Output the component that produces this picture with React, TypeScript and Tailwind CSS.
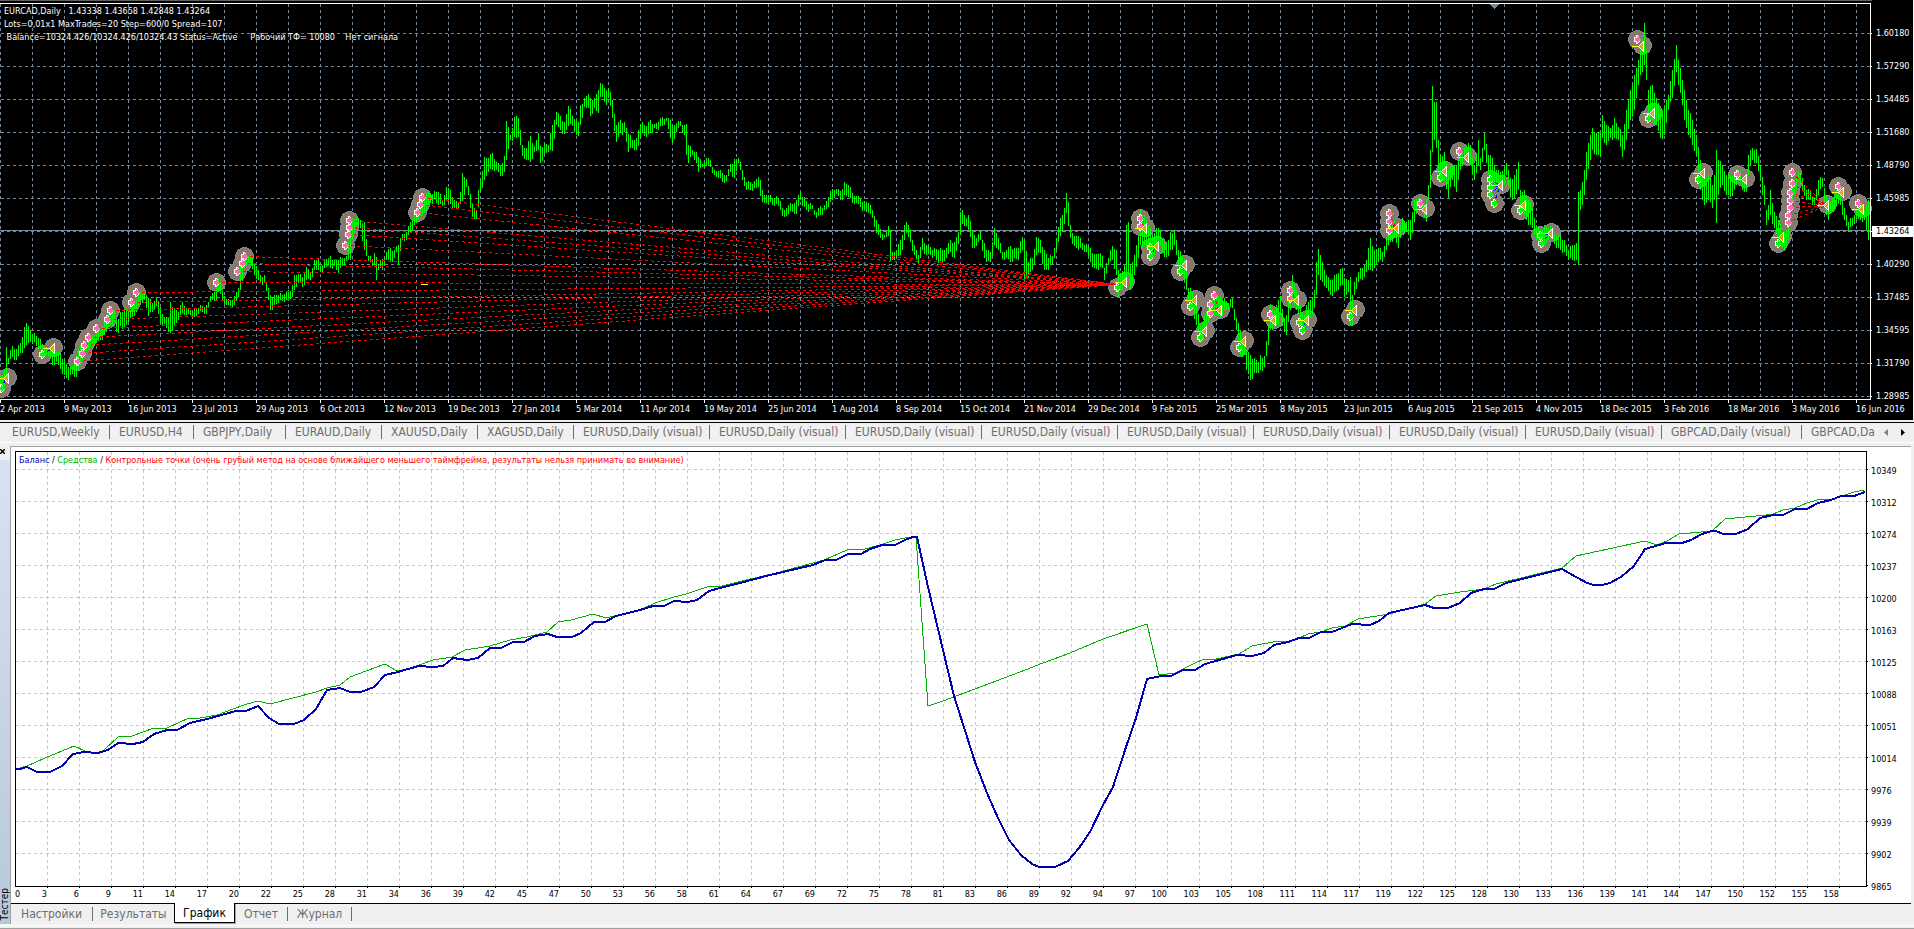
import React, { useState } from "react";
import clsx from "clsx";

type Point = [number, number];

interface Trade {
  exit: Point;
  buys?: Point[];
  sells?: Point[];
}

// [x, high, low] anchors of the daily bars, interpolated every 2px
const ANCHORS: [number, number, number][] = [
  [0, 375, 392], [4, 370, 385], [6, 347, 375], [8, 358, 364], [12, 346, 357], [16, 349, 360], [20, 343, 353], [24, 327, 348],
  [26, 323, 345], [30, 330, 342], [34, 333, 342], [38, 338, 350], [42, 344, 352], [48, 349, 356], [52, 352, 365], [56, 352, 362],
  [60, 354, 369], [64, 360, 375], [68, 367, 380], [72, 366, 374], [76, 355, 377], [80, 345, 365], [84, 345, 352], [88, 340, 350],
  [92, 335, 347], [96, 333, 343], [100, 330, 340], [104, 320, 335], [110, 312, 325], [114, 310, 322], [116, 320, 332], [118, 319, 333],
  [120, 312, 326], [124, 308, 327], [128, 312, 322], [132, 305, 317], [136, 300, 312], [140, 292, 302], [144, 292, 300], [148, 298, 316],
  [152, 303, 312], [156, 297, 306], [160, 307, 324], [164, 317, 324], [168, 317, 332], [170, 302, 333], [174, 308, 325], [178, 312, 320],
  [182, 302, 313], [186, 308, 315], [190, 310, 315], [194, 308, 317], [198, 308, 314], [202, 306, 312], [206, 305, 314], [208, 302, 308],
  [212, 293, 300], [216, 288, 300], [218, 278, 292], [222, 290, 300], [226, 299, 305], [230, 300, 306], [234, 296, 305], [238, 288, 297],
  [240, 265, 290], [244, 255, 268], [248, 256, 264], [252, 258, 269], [256, 266, 279], [260, 275, 283], [264, 275, 282], [266, 283, 291],
  [270, 295, 310], [274, 295, 305], [278, 295, 303], [282, 295, 301], [286, 291, 300], [290, 291, 299], [294, 275, 290], [298, 274, 283],
  [302, 277, 287], [306, 267, 280], [310, 272, 280], [314, 260, 270], [318, 259, 270], [320, 265, 272], [324, 260, 268], [328, 258, 265],
  [330, 256, 268], [334, 260, 266], [338, 260, 273], [342, 258, 266], [346, 256, 261], [350, 230, 260], [352, 218, 240], [356, 217, 225],
  [360, 220, 228], [364, 222, 250], [368, 256, 261], [372, 259, 266], [374, 253, 265], [376, 257, 280], [378, 264, 270], [382, 259, 270],
  [386, 252, 260], [390, 248, 262], [394, 250, 258], [396, 246, 252], [398, 245, 265], [402, 234, 240], [406, 232, 240], [410, 222, 232],
  [414, 212, 225], [418, 210, 220], [422, 198, 215], [426, 193, 210], [430, 193, 203], [434, 191, 200], [438, 192, 205], [442, 200, 206],
  [446, 187, 201], [450, 190, 204], [454, 200, 208], [458, 202, 208], [460, 192, 204], [462, 173, 201], [466, 179, 187], [468, 186, 195],
  [470, 194, 208], [472, 204, 217], [476, 210, 219], [478, 190, 207], [480, 180, 192], [484, 157, 180], [488, 158, 172], [492, 153, 170],
  [496, 162, 170], [500, 165, 176], [504, 156, 172], [506, 121, 160], [510, 135, 140], [514, 117, 137], [516, 116, 138], [518, 118, 137],
  [522, 145, 156], [526, 148, 160], [530, 136, 162], [534, 146, 152], [538, 133, 150], [540, 146, 163], [544, 143, 154], [548, 145, 152],
  [552, 125, 151], [556, 112, 125], [560, 116, 130], [564, 122, 134], [568, 106, 126], [572, 116, 126], [576, 120, 135], [578, 122, 136],
  [580, 105, 125], [584, 98, 107], [588, 94, 108], [590, 98, 116], [594, 98, 108], [598, 90, 113], [600, 83, 97], [602, 84, 97],
  [606, 90, 105], [608, 88, 98], [612, 100, 118], [616, 125, 142], [620, 120, 133], [624, 122, 132], [628, 134, 152], [632, 140, 148],
  [636, 138, 150], [638, 130, 146], [642, 122, 133], [646, 126, 137], [650, 120, 133], [654, 124, 128], [658, 122, 130], [662, 117, 126],
  [666, 118, 121], [670, 120, 138], [672, 125, 143], [676, 123, 132], [680, 121, 126], [684, 125, 135], [686, 124, 155], [688, 145, 163],
  [692, 150, 155], [696, 152, 163], [698, 157, 172], [702, 164, 167], [706, 158, 166], [710, 160, 167], [714, 170, 175], [718, 171, 178],
  [722, 173, 182], [726, 175, 181], [730, 164, 172], [734, 159, 178], [738, 158, 163], [742, 170, 180], [746, 182, 190], [750, 182, 190],
  [754, 181, 188], [758, 177, 187], [760, 180, 196], [764, 195, 203], [768, 195, 203], [772, 198, 205], [776, 196, 204], [780, 201, 210],
  [784, 210, 217], [788, 205, 214], [792, 204, 212], [796, 200, 214], [800, 192, 200], [804, 197, 207], [808, 204, 212], [812, 205, 209],
  [816, 212, 218], [820, 206, 215], [824, 205, 210], [828, 197, 207], [832, 189, 200], [836, 189, 194], [840, 191, 200], [844, 182, 195],
  [848, 185, 197], [852, 193, 203], [856, 196, 203], [860, 198, 207], [864, 201, 210], [868, 203, 213], [872, 210, 218], [876, 220, 233],
  [880, 229, 238], [884, 235, 238], [888, 226, 236], [890, 230, 262], [892, 252, 260], [896, 250, 258], [900, 240, 255], [904, 225, 240],
  [906, 222, 233], [910, 230, 242], [914, 245, 255], [918, 255, 265], [920, 247, 258], [922, 238, 250], [926, 245, 255], [930, 247, 255],
  [934, 248, 256], [938, 250, 263], [942, 250, 262], [946, 248, 258], [950, 240, 252], [954, 242, 258], [958, 232, 244], [960, 212, 235],
  [962, 210, 224], [966, 218, 226], [968, 215, 230], [972, 230, 248], [976, 238, 246], [980, 232, 240], [984, 243, 258], [986, 250, 262],
  [990, 252, 262], [994, 228, 245], [998, 238, 250], [1002, 252, 259], [1006, 250, 258], [1010, 246, 262], [1014, 248, 258], [1018, 248, 260],
  [1022, 237, 250], [1024, 240, 280], [1028, 262, 278], [1032, 258, 270], [1036, 237, 255], [1040, 240, 253], [1044, 250, 270], [1048, 258, 270],
  [1052, 256, 264], [1056, 238, 250], [1060, 218, 236], [1064, 208, 224], [1066, 193, 213], [1068, 202, 226], [1070, 225, 238], [1074, 236, 246],
  [1078, 236, 250], [1082, 243, 250], [1086, 244, 252], [1090, 248, 262], [1094, 254, 268], [1098, 254, 270], [1102, 256, 268], [1104, 268, 280],
  [1108, 258, 265], [1112, 246, 260], [1116, 250, 275], [1118, 270, 297], [1120, 273, 290], [1124, 265, 285], [1126, 225, 280], [1128, 222, 275],
  [1130, 265, 290], [1134, 255, 275], [1138, 235, 258], [1140, 210, 245], [1144, 215, 245], [1148, 225, 250], [1152, 235, 258], [1156, 228, 250],
  [1160, 230, 245], [1164, 243, 257], [1168, 240, 256], [1170, 232, 250], [1174, 230, 245], [1178, 250, 265], [1182, 255, 272], [1186, 260, 290],
  [1188, 288, 302], [1192, 292, 310], [1196, 305, 325], [1200, 325, 338], [1204, 315, 330], [1208, 308, 322], [1212, 300, 315], [1216, 297, 315],
  [1220, 297, 318], [1224, 298, 310], [1228, 303, 310], [1232, 298, 308], [1236, 318, 330], [1240, 330, 355], [1244, 345, 355], [1246, 350, 370],
  [1250, 355, 380], [1254, 358, 373], [1258, 362, 373], [1260, 355, 370], [1264, 356, 367], [1268, 325, 345], [1270, 304, 330], [1274, 310, 325],
  [1278, 300, 325], [1280, 296, 315], [1284, 318, 332], [1286, 315, 335], [1290, 290, 310], [1292, 275, 300], [1296, 290, 310], [1300, 305, 320],
  [1304, 315, 332], [1306, 305, 325], [1310, 300, 318], [1314, 290, 308], [1316, 262, 295], [1318, 249, 275], [1320, 255, 280], [1322, 262, 282],
  [1326, 275, 288], [1330, 280, 295], [1334, 275, 292], [1338, 273, 290], [1342, 268, 285], [1344, 278, 297], [1348, 280, 292], [1350, 277, 325],
  [1352, 295, 325], [1354, 282, 295], [1358, 272, 282], [1362, 268, 280], [1366, 260, 272], [1370, 238, 270], [1374, 250, 268], [1378, 248, 262],
  [1382, 252, 262], [1386, 238, 250], [1390, 225, 242], [1394, 220, 238], [1398, 235, 248], [1402, 218, 232], [1406, 222, 232], [1410, 220, 240],
  [1414, 200, 222], [1418, 197, 205], [1422, 205, 212], [1426, 200, 222], [1428, 185, 200], [1430, 150, 188], [1432, 86, 152], [1434, 102, 140],
  [1436, 102, 148], [1438, 140, 173], [1440, 155, 178], [1444, 152, 180], [1448, 170, 198], [1452, 165, 180], [1456, 165, 192], [1460, 155, 170],
  [1464, 148, 158], [1468, 143, 155], [1470, 145, 165], [1474, 165, 180], [1478, 140, 165], [1480, 158, 170], [1484, 133, 150], [1488, 155, 175],
  [1492, 158, 180], [1496, 170, 190], [1500, 172, 190], [1504, 165, 185], [1506, 163, 175], [1510, 178, 198], [1514, 175, 198], [1518, 162, 190],
  [1520, 190, 205], [1524, 190, 215], [1528, 200, 225], [1532, 208, 228], [1536, 225, 240], [1540, 230, 245], [1544, 225, 245], [1548, 228, 240],
  [1552, 228, 238], [1556, 236, 248], [1560, 235, 250], [1564, 240, 252], [1568, 250, 260], [1572, 245, 260], [1576, 243, 260], [1578, 192, 265],
  [1580, 190, 210], [1584, 170, 195], [1586, 152, 180], [1590, 135, 160], [1592, 128, 150], [1596, 133, 155], [1600, 133, 157], [1602, 115, 138],
  [1606, 125, 145], [1610, 128, 138], [1614, 118, 138], [1618, 127, 140], [1622, 135, 157], [1626, 110, 140], [1630, 90, 120], [1634, 75, 110],
  [1638, 60, 85], [1640, 50, 75], [1644, 23, 65], [1646, 50, 80], [1648, 90, 115], [1652, 85, 120], [1656, 98, 125], [1660, 110, 138],
  [1664, 105, 135], [1668, 95, 110], [1672, 70, 98], [1676, 45, 72], [1678, 60, 85], [1682, 80, 105], [1684, 90, 120], [1688, 110, 135],
  [1692, 120, 145], [1696, 135, 155], [1700, 160, 190], [1704, 180, 205], [1708, 175, 200], [1712, 185, 208], [1714, 175, 200], [1716, 150, 223],
  [1718, 160, 195], [1722, 165, 185], [1726, 175, 195], [1730, 175, 197], [1734, 172, 190], [1738, 170, 180], [1742, 178, 190], [1746, 180, 192],
  [1748, 155, 175], [1752, 148, 160], [1756, 149, 163], [1760, 165, 180], [1764, 185, 205], [1766, 210, 225], [1768, 205, 220], [1770, 190, 215],
  [1774, 212, 228], [1778, 220, 240], [1782, 232, 248], [1786, 230, 248], [1788, 215, 240], [1790, 190, 200], [1794, 180, 195], [1798, 172, 182],
  [1802, 178, 190], [1806, 190, 200], [1810, 190, 200], [1814, 197, 205], [1818, 180, 195], [1822, 178, 187], [1826, 195, 215], [1828, 210, 220],
  [1832, 198, 212], [1836, 190, 205], [1840, 190, 205], [1844, 208, 220], [1848, 222, 232], [1852, 218, 226], [1856, 210, 220], [1860, 205, 220],
  [1864, 210, 220], [1868, 200, 240],
];

const BASKET_EXIT: Point = [1118, 284];
const BASKET: Point[] = [
  [77, 361], [82, 353], [84, 345], [88, 337], [96, 328], [107, 319], [110, 310], [131, 302], [136, 292], [216, 282],
  [237, 271], [242, 263], [244, 256], [345, 245], [348, 234], [349, 227], [349, 220], [417, 212], [420, 204], [422, 197],
];

const TRADES: Trade[] = [
  { exit: [6, 378], buys: [[1, 388]] },
  { exit: [52, 348], buys: [[42, 354]] },
  { exit: [1124, 282], buys: [[1117, 287]] },
  { exit: [1144, 228], sells: [[1140, 218], [1140, 226]] },
  { exit: [1156, 246], buys: [[1150, 247], [1150, 256]] },
  { exit: [1184, 265], buys: [[1180, 271]] },
  { exit: [1194, 300], buys: [[1190, 306]] },
  { exit: [1204, 331], buys: [[1200, 337]] },
  { exit: [1219, 310], sells: [[1214, 295], [1210, 304], [1210, 313]] },
  { exit: [1243, 341], buys: [[1239, 347]] },
  { exit: [1273, 320], sells: [[1270, 314]] },
  { exit: [1296, 300], sells: [[1290, 290], [1290, 298]] },
  { exit: [1306, 320], buys: [[1299, 322], [1302, 330]] },
  { exit: [1354, 310], buys: [[1350, 316]] },
  { exit: [1396, 228], sells: [[1389, 213], [1389, 221], [1389, 230]] },
  { exit: [1424, 209], sells: [[1420, 203]] },
  { exit: [1444, 171], buys: [[1440, 177]] },
  { exit: [1466, 157], sells: [[1459, 151]] },
  { exit: [1500, 185], buys: [[1490, 179], [1490, 187], [1490, 194], [1494, 203]] },
  { exit: [1523, 205], buys: [[1520, 210]] },
  { exit: [1550, 233], buys: [[1540, 235], [1541, 243]] },
  { exit: [1641, 46], sells: [[1637, 39]] },
  { exit: [1652, 113], buys: [[1648, 118]] },
  { exit: [1702, 173], buys: [[1698, 179]] },
  { exit: [1744, 179], sells: [[1737, 174]] },
  { exit: [1781, 237], buys: [[1778, 243]] },
  { exit: [1826, 205], sells: [[1792, 172], [1792, 183], [1790, 192], [1790, 200], [1790, 207], [1788, 215], [1788, 222]] },
  { exit: [1841, 192], sells: [[1838, 186]] },
  { exit: [1861, 209], sells: [[1858, 203]] },
];

const DATES = [
  "2 Apr 2013", "9 May 2013", "16 Jun 2013", "23 Jul 2013", "29 Aug 2013", "6 Oct 2013", "12 Nov 2013", "19 Dec 2013",
  "27 Jan 2014", "5 Mar 2014", "11 Apr 2014", "19 May 2014", "25 Jun 2014", "1 Aug 2014", "8 Sep 2014", "15 Oct 2014",
  "21 Nov 2014", "29 Dec 2014", "9 Feb 2015", "25 Mar 2015", "8 May 2015", "23 Jun 2015", "6 Aug 2015", "21 Sep 2015",
  "4 Nov 2015", "18 Dec 2015", "3 Feb 2016", "18 Mar 2016", "3 May 2016", "16 Jun 2016",
];

const PRICES = [
  "1.60180", "1.57290", "1.54485", "1.51680", "1.48790", "1.45985",
  "1.43264", "1.40290", "1.37485", "1.34595", "1.31790", "1.28985",
];
const CURRENT_PRICE = "1.43264";

const CHART_TABS = [
  { label: "EURUSD,Weekly", width: "w-[107px]" },
  { label: "EURUSD,H4", width: "w-[84px]" },
  { label: "GBPJPY,Daily", width: "w-[92px]" },
  { label: "EURAUD,Daily", width: "w-[96px]" },
  { label: "XAUUSD,Daily", width: "w-[96px]" },
  { label: "XAGUSD,Daily", width: "w-[96px]" },
  ...Array.from({ length: 8 }, () => ({ label: "EURUSD,Daily (visual)", width: "w-[136px]" })),
  { label: "GBPCAD,Daily (visual)", width: "w-[140px]" },
];

const TRADE_NUMBERS = [
  3, 6, 9, 11, 14, 17, 20, 22, 25, 28, 31, 34, 36, 39, 42, 45, 47, 50, 53, 56, 58, 61, 64, 67, 69, 72, 75, 78, 81,
  83, 86, 89, 92, 94, 97, 100, 103, 105, 108, 111, 114, 117, 119, 122, 125, 128, 130, 133, 136, 139, 141, 144, 147,
  150, 152, 155, 158,
];

const BALANCES = [10349, 10312, 10274, 10237, 10200, 10163, 10125, 10088, 10051, 10014, 9976, 9939, 9902, 9865];

const BALANCE_LINE =
  "16,769 20,769 27,767 37,772 50,772 62,766 73,754 84,752 98,753 108,750 118,743 133,744 143,742 154,734 167,730 177,730 190,723 207,719 236,711 246,711 258,706 269,718 279,724 294,724 304,720 316,709 327,690 340,688 350,692 361,692 374,687 385,675 398,672 408,669 419,666 433,667 443,666 453,658 467,660 478,658 490,648 501,648 513,642 524,642 535,636 548,634 557,637 572,637 581,633 594,622 605,622 616,616 640,610 653,606 664,606 674,601 688,602 697,600 709,591 720,588 740,583 770,575 800,568 813,565 825,560 836,560 848,554 861,554 870,549 882,545 895,545 905,540 913,537 917,537 928,587 954,696 975,762 987,793 998,818 1009,840 1021,855 1032,864 1039,867 1055,867 1068,861 1079,848 1090,832 1103,805 1113,787 1126,747 1136,718 1147,679 1161,676 1171,676 1183,670 1195,670 1205,664 1237,655 1252,656 1264,653 1274,645 1288,642 1299,638 1309,638 1321,632 1332,632 1352,624 1370,625 1379,621 1389,613 1425,605 1434,608 1448,608 1460,603 1471,593 1484,589 1494,589 1506,583 1562,569 1576,577 1587,583 1594,585 1602,585 1610,583 1621,577 1634,566 1645,549 1666,543 1682,543 1691,540 1702,534 1712,531 1716,531 1723,534 1736,534 1748,529 1760,518 1773,515 1783,515 1795,509 1807,509 1818,503 1831,500 1841,496 1854,496 1865,492";

const EQUITY_LINE =
  "16,769 27,766 45,758 62,751 74,746 85,751 97,754 104,750 119,736 132,736 154,728 167,728 189,718 200,718 217,715 233,709 247,704 258,701 270,704 316,692 327,688 340,685 350,677 385,664 397,671 408,669 433,660 452,657 465,650 478,648 490,646 510,640 527,637 547,632 558,622 571,620 593,614 606,618 640,610 655,603 674,597 686,594 710,586 718,587 742,581 776,573 824,560 847,550 865,549 880,545 895,540 910,537 916,537 928,706 943,701 1020,672 1043,663 1070,653 1103,639 1147,624 1159,675 1175,673 1193,664 1204,659 1212,660 1239,654 1252,646 1273,642 1289,641 1299,638 1308,634 1321,632 1332,628 1345,626 1358,619 1389,614 1425,604 1436,596 1460,592 1484,589 1496,584 1562,568 1576,556 1645,541 1657,545 1667,541 1679,534 1712,531 1725,519 1766,515 1773,514 1783,510 1795,508 1807,503 1817,500 1834,499 1854,492 1864,490";

const range = (count: number) => Array.from({ length: count }, (_, i) => i);

const buildBars = () => {
  let d = "";
  for (let i = 0; i < ANCHORS.length - 1; i++) {
    const [x0, hi0, lo0] = ANCHORS[i];
    const [x1, hi1, lo1] = ANCHORS[i + 1];
    for (let x = x0; x < x1; x += 2) {
      const t = (x - x0) / (x1 - x0);
      const wobble = x === x0 ? 0 : ((x * 7) % 5) - 2;
      const hi = Math.round(hi0 + (hi1 - hi0) * t) + wobble;
      const lo = Math.round(lo0 + (lo1 - lo0) * t) + wobble;
      d += `M${x + 0.5} ${hi}V${lo}`;
    }
  }
  return d + "M1868.5 200V240";
};

const BARS = buildBars();

const Halo: React.FC<{ at: Point }> = ({ at: [x, y] }) => (
  <circle cx={x + 0.5} cy={y + 0.5} r={9} fill="#8b7765" stroke="#778899" />
);

const EntryArrow: React.FC<{ at: Point; color: string }> = ({ at: [x, y], color }) => (
  <g transform={`translate(${x + 0.5} ${y + 0.5})`}>
    <path d="M-3 -2H-1V-4L4 0.5L-1 4V2H-3Z" fill={color} />
    <path d="M2 -2L0 -4H-1V-2H-3V2H-1V4H0L2 2" stroke="#ffffff" />
  </g>
);

const ExitArrow: React.FC<{ at: Point }> = ({ at: [x, y] }) => (
  <g transform={`translate(${x} ${y})`}>
    <path d="M-9 0.5H-3" stroke="#ffff00" />
    <path d="M-3 0.5L2.5 -4.5V5.5Z" fill="#daa520" />
    <path d="M-2.5 0.5L2.5 -4.5V5.5Z" stroke="#ffffff" />
  </g>
);

const PriceChart: React.FC = () => (
  <svg
    className="block h-[403px] w-full"
    viewBox="0 0 1872 403"
    preserveAspectRatio="none"
    shapeRendering="crispEdges"
    fill="none"
    role="img"
    aria-label="EURCAD,Daily"
  >
    <g stroke="#778899" strokeDasharray="3 3">
      {range(59).map((i) => (
        <path key={`v${i}`} d={`M${i * 32 + 0.5} 4V399`} />
      ))}
      {range(12).map((i) => (
        <path key={`h${i}`} d={`M1 ${i * 33 + 33.5}H1870`} />
      ))}
    </g>
    <path d="M0 230.5H1870" stroke="#778899" />
    <path d="M1489 4H1500L1494.5 9Z" fill="#778899" />

    {BASKET.map((p, i) => (
      <Halo key={i} at={p} />
    ))}
    {TRADES.map((t, i) => (
      <g key={i}>
        {[...(t.sells ?? []), ...(t.buys ?? [])].map((p, j) => (
          <Halo key={j} at={p} />
        ))}
        <Halo at={[t.exit[0] + 1, t.exit[1] - 1]} />
      </g>
    ))}

    <path d={BARS} stroke="#00ff00" />

    <g stroke="#ff0000" strokeDasharray="3 3">
      {BASKET.map(([x, y], i) => (
        <path key={i} d={`M${x} ${y + 0.5}L${BASKET_EXIT[0]} ${BASKET_EXIT[1] + 0.5}`} />
      ))}
    </g>
    <path d="M421 284.5H428" stroke="#ffff00" />

    {TRADES.map(({ exit, buys = [], sells = [] }, i) => (
      <g key={i}>
        <g strokeDasharray="3 3">
          {buys.map(([x, y], j) => (
            <path key={`b${j}`} d={`M${x} ${y + 0.5}L${exit[0]} ${exit[1] + 0.5}`} stroke="#0000ff" />
          ))}
          {sells.map(([x, y], j) => (
            <path key={`s${j}`} d={`M${x} ${y + 0.5}L${exit[0]} ${exit[1] + 0.5}`} stroke="#ff0000" />
          ))}
        </g>
        {buys.map((p, j) => (
          <EntryArrow key={`ba${j}`} at={p} color="#00ff00" />
        ))}
        {sells.map((p, j) => (
          <EntryArrow key={`sa${j}`} at={p} color="#ff69b4" />
        ))}
        <ExitArrow at={exit} />
      </g>
    ))}
    {BASKET.map((p, i) => (
      <EntryArrow key={i} at={p} color="#ff69b4" />
    ))}

    <path d="M0 0.5H1872" stroke="#606060" />
    <path d="M0 3.5H1870.5V399.5H0" stroke="#ffffff" />
    <g stroke="#ffffff">
      {range(30).map((i) => (
        <path key={`t${i}`} d={`M${i * 64 + 0.5} 400V403`} />
      ))}
      {range(12).map((i) => (
        <path key={`p${i}`} d={`M1871 ${i * 33 + 33.5}H1872`} />
      ))}
    </g>
  </svg>
);

const ChartWindow: React.FC = () => (
  <section className="flex h-[420px] border-r border-[#f0f0f0] bg-black text-[9px] text-white">
    <div className="relative min-w-0 flex-1 overflow-hidden">
      <PriceChart />
      <div className="absolute left-1 top-[5px] whitespace-pre leading-[13px]">
        <p>EURCAD,Daily{"   "}1.43338 1.43658 1.42848 1.43264</p>
        <p>Lots=0,01x1 MaxTrades=20 Step=600/0 Spread=107</p>
        <p> Balance=10324.426/10324.426/10324.43 Status=Active{"     "}Рабочий ТФ= 10080{"    "}Нет сигнала</p>
      </div>
    </div>
    <ol className="w-[41px] shrink-0 pt-[17px]">
      {PRICES.map((price) => (
        <li key={price} className="flex h-[33px] items-center">
          <span
            className={clsx(
              "w-full pl-1 leading-[11px]",
              price === CURRENT_PRICE && "bg-white text-black"
            )}
          >
            {price}
          </span>
        </li>
      ))}
    </ol>
  </section>
);

const TimeAxis: React.FC = () => (
  <ol className="-mt-[17px] flex h-[17px] overflow-hidden text-[9px] leading-3 text-white">
    {DATES.map((date) => (
      <li key={date} className="relative w-16 shrink-0 whitespace-nowrap">
        {date}
      </li>
    ))}
  </ol>
);

const ChartTabs: React.FC = () => (
  <div className="mt-0.5 flex h-5 items-start border-t border-black pt-0.5 text-xs text-[#6d6d6d]">
    <nav className="flex min-w-0 flex-1 overflow-hidden pl-[3px]" aria-label="Charts">
      {CHART_TABS.map((tab, i) => (
        <button
          key={i}
          type="button"
          className={clsx(
            "h-[14px] shrink-0 whitespace-nowrap border-r border-[#6d6d6d] pl-[9px] text-left leading-[14px]",
            tab.width
          )}
        >
          {tab.label}
        </button>
      ))}
      <button type="button" className="h-[14px] shrink-0 whitespace-nowrap pl-[9px] text-left leading-[14px]">
        GBPCAD,Da
      </button>
    </nav>
    <div className="flex h-[14px] w-[34px] shrink-0 items-center justify-between pl-1 pr-[9px]">
      <button type="button" aria-label="Scroll left">
        <svg className="block h-[7px] w-1" viewBox="0 0 4 7" fill="#808080">
          <path d="M4 0V7L0 3.5Z" />
        </svg>
      </button>
      <button type="button" aria-label="Scroll right">
        <svg className="block h-[7px] w-1" viewBox="0 0 4 7" fill="#000000">
          <path d="M0 0V7L4 3.5Z" />
        </svg>
      </button>
    </div>
  </div>
);

const BalanceChart: React.FC = () => (
  <svg
    className="block h-[437px] w-full"
    viewBox="15 451 1853 437"
    preserveAspectRatio="none"
    shapeRendering="crispEdges"
    fill="none"
    role="img"
    aria-label="Баланс / Средства"
  >
    <g stroke="#c8c8c8" strokeDasharray="3 3">
      {range(57).map((i) => (
        <path key={`v${i}`} d={`M${i * 32 + 47.5} 452V886`} />
      ))}
      {range(13).map((i) => (
        <path key={`h${i}`} d={`M16 ${i * 32 + 469.5}H1866`} />
      ))}
    </g>
    <g stroke="#000000">
      {range(57).map((i) => (
        <path key={`t${i}`} d={`M${i * 32 + 47.5} 886V888`} />
      ))}
      {range(14).map((i) => (
        <path key={`b${i}`} d={`M1866 ${i * 32 + 469.5}H1868`} />
      ))}
      <path d="M15.5 451.5H1866.5V886.5H15.5Z" />
    </g>
    <polyline points={EQUITY_LINE} stroke="#00b000" />
    <polyline points={BALANCE_LINE} stroke="#0000b0" strokeWidth={2} />
  </svg>
);

const TESTER_TABS = [
  { label: "Настройки", width: "w-[82px]" },
  { label: "Результаты", width: "w-[81px]" },
  { label: "График", width: "w-[61px]" },
  { label: "Отчет", width: "w-[53px]" },
  { label: "Журнал", width: "w-16" },
];

const Tester: React.FC = () => {
  const [active, setActive] = useState("График");

  return (
    <section className="mt-[3px] flex flex-1 pr-[3px]">
      <div className="flex w-[10px] shrink-0 flex-col">
        <button type="button" aria-label="Close" className="flex h-[14px] items-start pt-[3px]">
          <svg className="h-[5px] w-[5px]" viewBox="0 0 5 5" stroke="#000000" strokeWidth={1.5}>
            <path d="M0 0L5 5M5 0L0 5" />
          </svg>
        </button>
        <div className="flex flex-1 items-end bg-linear-to-b from-[#d6e3f2] to-[#b9c8d8] pb-1 text-[10px] leading-[9px]">
          <span className="rotate-180 [writing-mode:vertical-rl]">Тестер</span>
        </div>
      </div>

      <div className="flex min-w-0 flex-1 flex-col border-l border-t border-[#a0a0a0]">
        <div className="flex border-b border-black bg-white pl-1 text-[9px]">
          <div className="relative min-w-0 flex-1 overflow-hidden pt-1">
            <BalanceChart />
            <p className="absolute left-1 top-2 whitespace-nowrap leading-[11px]">
              <span className="text-[#0000b0]">Баланс</span> / <span className="text-[#00b000]">Средства</span> /{" "}
              <span className="text-[#ff0000]">
                Контрольные точки (очень грубый метод на основе ближайшего меньшего таймфрейма, результаты нельзя
                принимать во внимание)
              </span>
            </p>
            <ol className="flex h-[15px] text-right leading-3">
              <li className="w-2 text-left">0</li>
              {TRADE_NUMBERS.map((n) => (
                <li key={n} className={clsx("shrink-0", n === 3 ? "w-6" : "w-8")}>
                  {n}
                </li>
              ))}
            </ol>
          </div>
          <ol className="w-[43px] shrink-0 pl-[3px] pt-2">
            {BALANCES.map((value) => (
              <li key={value} className="h-8 leading-8">
                {value}
              </li>
            ))}
          </ol>
        </div>

        <nav className="flex items-start text-xs leading-[14px] text-[#6d6d6d]" aria-label="Тестер">
          {TESTER_TABS.map(({ label, width }) => (
            <button
              key={label}
              type="button"
              onClick={() => setActive(label)}
              className={clsx(
                "shrink-0 text-center",
                width,
                label === active
                  ? "-mt-px h-5 border border-t-0 border-black bg-white text-black shadow-[1px_1px_0_#a0a0a0]"
                  : "mt-[3px] h-[14px]",
                label !== active && label !== "Результаты" && "border-r border-[#6d6d6d]"
              )}
            >
              {label}
            </button>
          ))}
        </nav>
      </div>
    </section>
  );
};

const App: React.FC = () => (
  <main className="flex min-h-screen flex-col bg-[#f0f0f0] font-['DejaVu_Sans_Condensed','DejaVu_Sans',sans-serif] text-black">
    <ChartWindow />
    <TimeAxis />
    <ChartTabs />
    <hr className="border-white" />
    <Tester />
    <div className="mt-px flex h-1 flex-col justify-between border-b border-t border-b-[#a0a0a0] border-t-white" />
  </main>
);

export default App;
